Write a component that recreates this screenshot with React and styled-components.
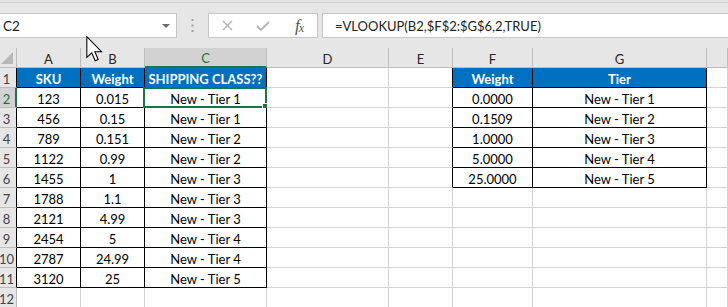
import React from "react";
import styled, { createGlobalStyle, css } from "styled-components";

const GlobalStyle = createGlobalStyle`
  html, body { margin: 0; padding: 0; background: #ffffff; overflow: hidden; }
  body { font-family: Lato, "Open Sans", "Liberation Sans", sans-serif; }
`;

const FONT = `Lato, "Open Sans", "Liberation Sans", sans-serif`;
const GRID = "#d4d4d4";
const HEAD_LINE = "#bdbdbd";
const GREEN = "#217346";
const BLUE = "#0070c0";

const Page = styled.div`
  position: relative;
  width: 728px;
  height: 307px;
  overflow: hidden;
  background: #ffffff;
`;

const Chrome = styled.div`
  background: #e6e6e6;
  padding-top: 2px;
`;

const Toolbar = styled.div`
  display: flex;
  align-items: flex-start;
  height: 46px;
  box-sizing: border-box;
  border-top: 1px solid #d3d3d3;
  padding-top: 10px;
`;

const NameBox = styled.div`
  width: 177px;
  height: 25px;
  box-sizing: border-box;
  background: #fff;
  border: 1px solid #c6c6c6;
  border-left: none;
  display: flex;
  align-items: center;
  justify-content: space-between;
  padding: 1px 6px 0 3px;
  font-family: ${FONT};
  font-size: 13.5px;
  color: #222;
`;

const DropArrow = styled.span`
  width: 0;
  height: 0;
  border-left: 4px solid transparent;
  border-right: 4px solid transparent;
  border-top: 4px solid #6b6b6b;
`;

const Grip = styled.div`
  width: 31px;
  height: 25px;
  display: flex;
  align-items: center;
  justify-content: center;
`;

const FxBox = styled.div`
  width: 110px;
  height: 25px;
  box-sizing: border-box;
  background: #fff;
  border: 1px solid #c6c6c6;
  display: grid;
  grid-template-columns: 36px 36px 36px;
  align-items: center;
  justify-items: center;
`;

const FxLabel = styled.span`
  font-family: "Liberation Serif", serif;
  font-style: italic;
  font-size: 17px;
  line-height: 1;
  color: #555;
  letter-spacing: -1px;
  & > sub {
    font-size: 12px;
    vertical-align: -1px;
  }
`;

const FormulaInput = styled.div`
  flex: 1;
  margin-left: 4px;
  height: 25px;
  box-sizing: border-box;
  background: #fff;
  border: 1px solid #c6c6c6;
  border-right: none;
  display: flex;
  align-items: center;
  padding: 1px 0 0 12px;
  font-family: ${FONT};
  font-size: 13px;
  color: #222;
  white-space: nowrap;
`;

const Sheet = styled.div`
  display: grid;
  grid-template-columns: 20px 64px 64px 122px 122px 64px 80px 174px 1fr;
  grid-auto-rows: 20px;
  margin-left: -3px;
  font-family: ${FONT};
  font-size: 13px;
`;

const baseCell = css`
  box-sizing: border-box;
  display: flex;
  align-items: center;
  justify-content: center;
  padding-top: 3px;
  white-space: nowrap;
  overflow: visible;
`;

const ColHeader = styled.div`
  ${baseCell}
  background: ${(p) => (p.$selected ? "#d2d2d2" : "#e6e6e6")};
  color: ${(p) => (p.$selected ? GREEN : "#262626")};
  border-right: 1px solid ${HEAD_LINE};
  border-bottom: ${(p) => (p.$selected ? `2px solid ${GREEN}` : `1px solid ${HEAD_LINE}`)};
  padding-top: 2px;
`;

const Corner = styled.div`
  box-sizing: border-box;
  background: #e6e6e6;
  border-right: 1px solid ${HEAD_LINE};
  border-bottom: 1px solid ${HEAD_LINE};
  display: flex;
  align-items: flex-end;
  justify-content: flex-end;
  padding: 0 3px 3px 0;
`;

const SelectAll = styled.span`
  width: 0;
  height: 0;
  border-left: 12px solid transparent;
  border-bottom: 12px solid #b8b8b8;
`;

const RowHeader = styled.div`
  ${baseCell}
  background: ${(p) => (p.$selected ? "#d2d2d2" : "#e6e6e6")};
  color: ${(p) => (p.$selected ? GREEN : "#444")};
  border-bottom: 1px solid ${HEAD_LINE};
  border-right: 1px solid ${(p) => p.$edge};
  box-shadow: ${(p) => (p.$selected ? `inset -1px 0 0 ${GREEN}` : "none")};
  padding-top: 2px;
`;

const Cell = styled.div`
  ${baseCell}
  position: relative;
  background: ${(p) => p.$bg || "#fff"};
  color: ${(p) => p.$color || "#000"};
  font-weight: ${(p) => (p.$bold ? 700 : 400)};
  border-right: 1px solid ${(p) => p.$right};
  border-bottom: 1px solid ${(p) => p.$bottom};
`;

const Selection = styled.div`
  position: absolute;
  top: -1px;
  left: -2px;
  right: -1px;
  bottom: -1px;
  border: 2px solid ${GREEN};
  pointer-events: none;
`;

const FillHandle = styled.div`
  position: absolute;
  right: -4px;
  bottom: -4px;
  width: 5px;
  height: 5px;
  background: ${GREEN};
  border: 1px solid #fff;
`;

const Pointer = styled.svg`
  position: absolute;
  left: 86px;
  top: 36px;
`;

const COLS = ["A", "B", "C", "D", "E", "F", "G", ""];

const tiers = ["New - Tier 1", "New - Tier 1", "New - Tier 2", "New - Tier 2", "New - Tier 3", "New - Tier 3", "New - Tier 3", "New - Tier 4", "New - Tier 4", "New - Tier 5"];
const skus = ["123", "456", "789", "1122", "1455", "1788", "2121", "2454", "2787", "3120"];
const weights = ["0.015", "0.15", "0.151", "0.99", "1", "1.1", "4.99", "5", "24.99", "25"];
const lookup = [
  ["0.0000", "New - Tier 1"],
  ["0.1509", "New - Tier 2"],
  ["1.0000", "New - Tier 3"],
  ["5.0000", "New - Tier 4"],
  ["25.0000", "New - Tier 5"],
];

// c: 1=A ... 8=H ; r: 1..12
function inTable(r, c) {
  if (r >= 1 && r <= 11 && c >= 1 && c <= 3) return true;
  if (r >= 1 && r <= 6 && c >= 6 && c <= 7) return true;
  return false;
}

function content(r, c) {
  if (r === 1) {
    return { 1: "SKU", 2: "Weight", 3: "SHIPPING CLASS??", 6: "Weight", 7: "Tier" }[c] || "";
  }
  const i = r - 2;
  if (r >= 2 && r <= 11) {
    if (c === 1) return skus[i];
    if (c === 2) return weights[i];
    if (c === 3) return tiers[i];
  }
  if (r >= 2 && r <= 6) {
    if (c === 6) return lookup[i][0];
    if (c === 7) return lookup[i][1];
  }
  return "";
}

function Dots() {
  return (
    <svg width="3" height="13" viewBox="0 0 3 13">
      <rect x="0.5" y="0" width="2" height="2" fill="#a0a0a0" />
      <rect x="0.5" y="5.5" width="2" height="2" fill="#a0a0a0" />
      <rect x="0.5" y="11" width="2" height="2" fill="#a0a0a0" />
    </svg>
  );
}

function CrossIcon() {
  return (
    <svg width="11" height="11" viewBox="0 0 11 11">
      <path d="M1 1 L10 10 M10 1 L1 10" stroke="#b3b3b3" strokeWidth="1.4" fill="none" />
    </svg>
  );
}

function CheckIcon() {
  return (
    <svg width="14" height="10" viewBox="0 0 14 10">
      <path d="M1 5 L5 9 L13 1" stroke="#b3b3b3" strokeWidth="1.8" fill="none" />
    </svg>
  );
}

export default function App() {
  const rows = [];
  for (let r = 1; r <= 12; r++) {
    rows.push(
      <RowHeader key={`rh${r}`} $selected={r === 2} $edge={r === 2 ? GREEN : inTable(r, 1) ? "#000" : HEAD_LINE}>
        {r}
      </RowHeader>
    );
    for (let c = 1; c <= 8; c++) {
      const table = inTable(r, c);
      const right = table || inTable(r, c + 1) ? "#000" : GRID;
      const bottom = table || inTable(r + 1, c) ? "#000" : GRID;
      const head = r === 1 && table;
      rows.push(
        <Cell
          key={`c${r}-${c}`}
          $right={right}
          $bottom={bottom}
          $bg={head ? BLUE : undefined}
          $color={head ? "#fff" : undefined}
          $bold={head}
        >
          {content(r, c)}
          {r === 2 && c === 3 && (
            <Selection>
              <FillHandle />
            </Selection>
          )}
        </Cell>
      );
    }
  }

  return (
    <Page>
      <GlobalStyle />
      <Chrome>
        <Toolbar>
          <NameBox>
            <span>C2</span>
            <DropArrow />
          </NameBox>
          <Grip>
            <Dots />
          </Grip>
          <FxBox>
            <CrossIcon />
            <CheckIcon />
            <FxLabel>
              f<sub>x</sub>
            </FxLabel>
          </FxBox>
          <FormulaInput>=VLOOKUP(B2,$F$2:$G$6,2,TRUE)</FormulaInput>
        </Toolbar>
      </Chrome>
      <Sheet>
        <Corner>
          <SelectAll />
        </Corner>
        {COLS.map((l, i) => (
          <ColHeader key={`h${i}`} $selected={l === "C"}>
            {l}
          </ColHeader>
        ))}
        {rows}
      </Sheet>
      <Pointer width="17" height="26" viewBox="0 0 12.5 19.5">
        <path
          d="M0.5 0.5 L0.5 16 L4.2 12.6 L6.8 18.6 L9 17.6 L6.5 11.8 L11.5 11.8 Z"
          fill="#fff"
          stroke="#000"
          strokeWidth="0.8"
          strokeLinejoin="miter"
        />
      </Pointer>
    </Page>
  );
}
